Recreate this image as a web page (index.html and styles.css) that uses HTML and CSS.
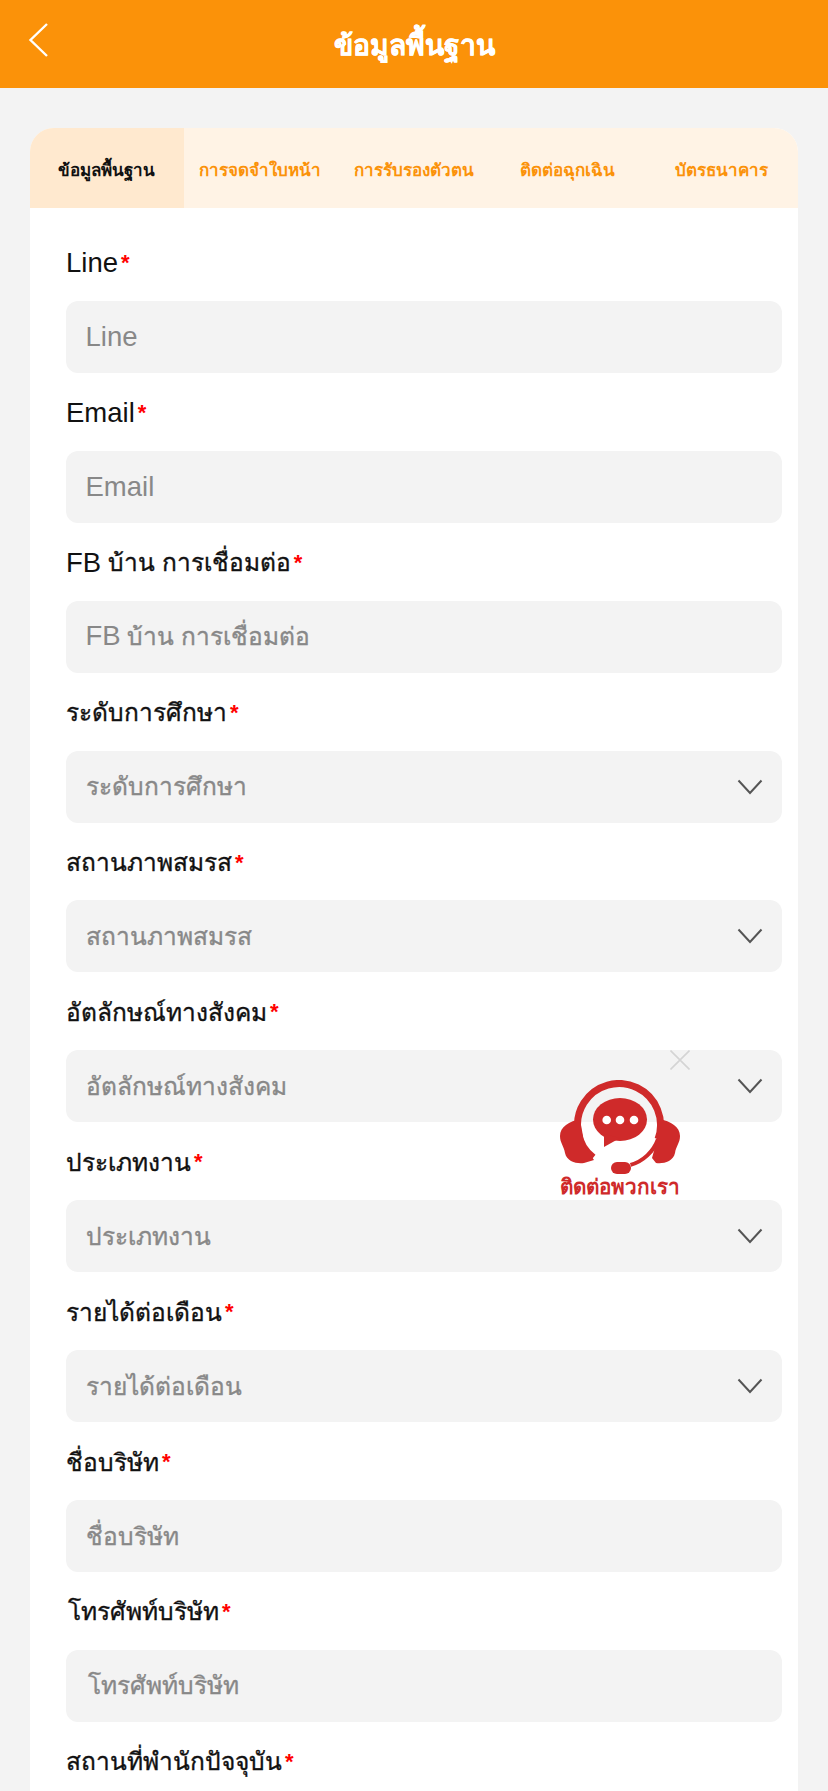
FILE: index.html
```html
<!DOCTYPE html>
<html lang="th">
<head>
<meta charset="utf-8">
<title>ข้อมูลพื้นฐาน</title>
<link rel="stylesheet" href="styles.css">
</head>
<body>
<header class="topbar">
  <svg class="back" width="22" height="36" viewBox="0 0 22 36"><path d="M20 2 3.5 18 20 34" fill="none" stroke="#fff" stroke-width="2.4"/></svg>
  <h1 class="title">ข้อมูลพื้นฐาน</h1>
</header>
<main class="card">
  <nav class="tabs">
    <div class="tab active">ข้อมูลพื้นฐาน</div>
    <div class="tab">การจดจำใบหน้า</div>
    <div class="tab">การรับรองตัวตน</div>
    <div class="tab">ติดต่อฉุกเฉิน</div>
    <div class="tab">บัตรธนาคาร</div>
  </nav>
  <form class="form">
    <div class="field"><div class="label"><span class="latin">Line</span><span class="req">*</span></div><div class="control"><span class="latin">Line</span></div></div>
    <div class="field"><div class="label"><span class="latin">Email</span><span class="req">*</span></div><div class="control"><span class="latin">Email</span></div></div>
    <div class="field"><div class="label"><span class="latin">FB</span>&nbsp;บ้าน การเชื่อมต่อ<span class="req">*</span></div><div class="control"><span><span class="latin">FB</span> บ้าน การเชื่อมต่อ</span></div></div>
    <div class="field"><div class="label">ระดับการศึกษา<span class="req">*</span></div><div class="control">ระดับการศึกษา<svg class="chev" width="26" height="16" viewBox="0 0 26 16"><path d="M1.5 1.5 13 14 24.5 1.5" fill="none" stroke="#555" stroke-width="2"/></svg></div></div>
    <div class="field"><div class="label">สถานภาพสมรส<span class="req">*</span></div><div class="control">สถานภาพสมรส<svg class="chev" width="26" height="16" viewBox="0 0 26 16"><path d="M1.5 1.5 13 14 24.5 1.5" fill="none" stroke="#555" stroke-width="2"/></svg></div></div>
    <div class="field"><div class="label">อัตลักษณ์ทางสังคม<span class="req">*</span></div><div class="control">อัตลักษณ์ทางสังคม<svg class="chev" width="26" height="16" viewBox="0 0 26 16"><path d="M1.5 1.5 13 14 24.5 1.5" fill="none" stroke="#555" stroke-width="2"/></svg></div></div>
    <div class="field"><div class="label">ประเภทงาน<span class="req">*</span></div><div class="control">ประเภทงาน<svg class="chev" width="26" height="16" viewBox="0 0 26 16"><path d="M1.5 1.5 13 14 24.5 1.5" fill="none" stroke="#555" stroke-width="2"/></svg></div></div>
    <div class="field"><div class="label">รายได้ต่อเดือน<span class="req">*</span></div><div class="control">รายได้ต่อเดือน<svg class="chev" width="26" height="16" viewBox="0 0 26 16"><path d="M1.5 1.5 13 14 24.5 1.5" fill="none" stroke="#555" stroke-width="2"/></svg></div></div>
    <div class="field"><div class="label">ชื่อบริษัท<span class="req">*</span></div><div class="control">ชื่อบริษัท</div></div>
    <div class="field"><div class="label label-lead">โทรศัพท์บริษัท<span class="req">*</span></div><div class="control control-lead">โทรศัพท์บริษัท</div></div>
    <div class="field"><div class="label">สถานที่พำนักปัจจุบัน<span class="req">*</span></div></div>
  </form>
</main>
<aside class="support">
  <svg class="close" width="20" height="20" viewBox="0 0 20 20"><path d="M.5.5 19.500 19.500M19.500.5.5 19.500" stroke="#d4d4d4" stroke-width="1.600"/></svg>
  <svg class="agent" width="120" height="96" viewBox="0 0 120 96">
    <path d="M33.300 77.600A41.500 41.500 0 1 1 98 59.200" fill="none" stroke="#cf2a2a" stroke-width="7"/>
    <path d="M98 59.200A41.500 41.500 0 0 1 70.500 84.900" fill="none" stroke="#cf2a2a" stroke-width="4"/>
    <path d="M21 39C9 41 0 47 0 56c0 7 4 10 5 17 2 9 12 11 19 10l10-3-9-13-4-22Z" fill="#cf2a2a"/>
    <path d="M99 39c12 2 21 8 21 17 0 7-4 10-5 17-2 9-12 11-19 10l-4-5 5-18V45Z" fill="#cf2a2a"/>
    <rect x="51" y="82" width="20" height="12" rx="6" fill="#cf2a2a"/>
    <ellipse cx="60" cy="39.500" rx="27" ry="21.500" fill="#cf2a2a"/>
    <path d="M44 54 44 67 60 58Z" fill="#cf2a2a"/>
    <circle cx="46.700" cy="40" r="4.300" fill="#fff"/><circle cx="60" cy="40" r="4.300" fill="#fff"/><circle cx="74" cy="40" r="4.300" fill="#fff"/>
  </svg>
  <div class="support-text">ติดต่อพวกเรา</div>
</aside>
</body>
</html>
```
FILE: styles.css
```css
html, body { margin: 0; padding: 0; height: 100%; overflow: hidden; }
body { background: #f3f3f3; font-family: "Liberation Sans", "Noto Sans", sans-serif; color: #111; position: relative; }
.topbar { height: 88px; box-sizing: border-box; padding-top: 2px; background: #fb9209; display: flex; align-items: center; justify-content: center; position: relative; }
.back { position: absolute; left: 27px; top: 22px; }
.title { margin: 0; font-size: 28.2px; font-weight: 700; color: #fff; -webkit-text-stroke: 0.3px #fff; }
.card { margin: 40px 30px 0; background: #fff; border-radius: 24px 24px 0 0; overflow: hidden; }
.tabs { display: flex; height: 80px; background: #fff3e5; }
.tab { flex: 1; display: flex; align-items: center; justify-content: center; padding-top: 2px; box-sizing: border-box; font-size: 17px; font-weight: 700; color: #fb9209; white-space: nowrap; }
.tab.active { background: #ffe9cf; color: #111; }
.form { padding: 15px 16px 0 36px; }
.field { display: flex; flex-direction: column; }
.label { height: 77.9px; box-sizing: border-box; padding-top: 2px; display: flex; align-items: center; font-size: 24.5px; -webkit-text-stroke: 0.35px #111; white-space: pre; }
.label-lead { padding-left: 2px; }
.latin { font-size: 27.5px; -webkit-text-stroke: 0; }
.req { color: #f00; font-size: 22px; font-weight: 700; margin-left: 3px; -webkit-text-stroke: 0; }
.control { height: 72px; box-sizing: border-box; padding: 0 19px 0 19.500px; background: #f3f3f3; border-radius: 12px; display: flex; align-items: center; justify-content: space-between; font-size: 24.5px; color: #888; -webkit-text-stroke: 0.35px #888; }
.control-lead { padding-left: 22px; }
.support { position: absolute; left: 560px; top: 1050px; width: 130px; height: 152px; }
.close { position: absolute; left: 110px; top: 0; }
.agent { position: absolute; left: 0; top: 30px; }
.support-text { position: absolute; left: -5px; width: 130px; top: 124px; text-align: center; font-size: 20.7px; line-height: 26px; font-weight: 700; color: #cf2a2a; white-space: nowrap; }
```
